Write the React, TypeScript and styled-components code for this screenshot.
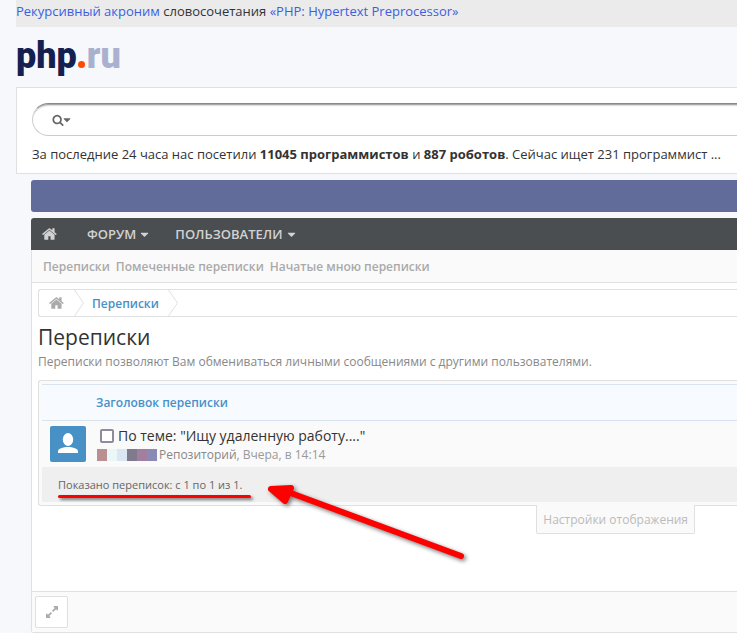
import React from "react";
import styled, { createGlobalStyle } from "styled-components";

const line = "#e0e0e0";
const blue = "#4891c6";

const GlobalStyle = createGlobalStyle`
  * { box-sizing: border-box; }
  body {
    margin: 0;
    background: #f7f8fb;
    color: #333;
    font: 13px/20px "Open Sans", sans-serif;
    overflow-x: hidden;
  }
  a { color: inherit; text-decoration: none; }
  button, input { font: inherit; }
`;

const Page = styled.div`
  padding-left: 16px;
`;

const Slogan = styled.p`
  margin: 0;
  height: 27px;
  padding-top: 1px;
  background: #ebebeb;
  a { color: #3c5fe0; }
`;

const Logo = styled.a`
  display: flex;
  align-items: baseline;
  width: fit-content;
  height: 60px;
  padding-top: 9px;
  font: 900 36px/40px Roboto, sans-serif;
  color: #14204f;
`;

const LogoDot = styled.span`
  width: 7px;
  height: 7px;
  margin: 0 2px 0 1px;
  border-radius: 50%;
  background: #ff4a00;
`;

const LogoZone = styled.span`
  color: #aab1cf;
`;

const SearchPanel = styled.section`
  height: 87px;
  padding: 15px 0 0 15px;
  background: #fff;
  border: 1px solid ${line};
  border-right: 0;
`;

const SearchForm = styled.form`
  display: flex;
  align-items: center;
  height: 33px;
  border: 1px solid #ccc;
  border-top-color: #888;
  border-right: 0;
  border-radius: 17px 0 0 17px;
  box-shadow: inset 0 3px 2px -2px #888;
`;

const SearchMode = styled.button`
  display: flex;
  align-items: center;
  margin-left: 19px;
  padding: 0;
  border: 0;
  background: none;
  color: #666;
  svg + svg { margin-left: -3px; }
`;

const SearchInput = styled.input`
  flex: 1;
  min-width: 0;
  margin-left: 4px;
  border: 0;
  outline: 0;
  background: none;
`;

const Stats = styled.p`
  margin: 8px 0 0;
  white-space: nowrap;
`;

const Main = styled.main`
  margin: 6px 0 0 15px;
`;

const Banner = styled.div`
  height: 32px;
  border-radius: 3px 0 0 3px;
  background: #626c9a;
`;

const NavBar = styled.nav`
  display: flex;
  align-items: center;
  height: 32px;
  margin-top: 6px;
  padding-left: 11px;
  border-radius: 3px 0 0 0;
  background: #4a4e50;
  color: #d2d2d2;
`;

const NavHome = styled.a`
  display: flex;
  margin-right: 29px;
`;

const NavMenu = styled.button`
  display: flex;
  align-items: center;
  gap: 2px;
  margin-right: 24px;
  padding: 0;
  border: 0;
  background: none;
  color: inherit;
  font-weight: 600;
`;

const Content = styled.div`
  border: 1px solid ${line};
  border-width: 0 0 1px 1px;
  border-radius: 0 0 0 3px;
  background: #fff;
`;

const SubNav = styled.nav`
  display: flex;
  align-items: center;
  gap: 6px;
  height: 33px;
  padding: 2px 0 0 11px;
  border-bottom: 1px solid ${line};
  background: #fafafa;
  color: #aaa;
  font-size: 12px;
  font-weight: 600;
`;

const Body = styled.div`
  padding: 6px 0 0 6px;
`;

const Crumbs = styled.nav`
  display: flex;
  align-items: center;
  height: 28px;
  padding-left: 10px;
  border: 1px solid ${line};
  border-right: 0;
  border-radius: 3px 0 0 3px;
  color: ${blue};
  font-size: 12px;
  line-height: 22px;
  font-weight: 600;
`;

const CrumbHome = styled.a`
  display: flex;
  color: #aaa;
`;

const CrumbLink = styled.a`
  padding-top: 2px;
`;

const CrumbArrow = styled.svg`
  margin: 0 8px 0 9px;
  fill: none;
  stroke: ${line};
`;

const Title = styled.h1`
  margin: 4px 0 0;
  font-size: 21px;
  line-height: 32px;
  font-weight: 400;
`;

const Description = styled.p`
  margin: 0;
  color: #888;
  font-size: 12px;
  line-height: 18px;
`;

const Discussions = styled.section`
  margin-top: 9px;
  padding: 3px 0 3px 3px;
  border: 1px solid ${line};
  border-right: 0;
  border-radius: 3px 0 0 3px;
  background: #fafafa;
`;

const ListHeader = styled.header`
  height: 37px;
  padding: 8px 0 0 54px;
  border: 1px solid #d9e4ee;
  border-width: 1px 0;
  background: #f7fbff;
  color: ${blue};
  font-size: 12px;
  font-weight: 600;
`;

const Row = styled.article`
  display: flex;
  gap: 11px;
  height: 46px;
  padding: 5px 0 0 8px;
`;

const Avatar = styled.a`
  width: 36px;
  height: 36px;
  border-radius: 2px;
  overflow: hidden;
  background: ${blue};
`;

const Subject = styled.div`
  display: flex;
  align-items: center;
  gap: 4px;
  padding-left: 3px;
  font-size: 14px;
`;

const CheckBox = styled.input`
  appearance: none;
  width: 14px;
  height: 14px;
  margin: 0;
  border: 2px solid #8f8b9d;
  border-radius: 2px;
  background: #fff;
`;

const Meta = styled.div`
  display: flex;
  align-items: center;
  color: #999;
  font-size: 12px;
  line-height: 18px;
`;

const HiddenName = styled.span`
  display: flex;
  margin-right: 2px;
`;

const Block = styled.span<{ $color: string }>`
  width: 10px;
  height: 12px;
  background: ${(p) => p.$color};
`;

const Author = styled.a`
  color: #888;
`;

const ListFooter = styled.footer`
  height: 35px;
  padding: 8px 0 0 16px;
  background: #efefef;
  color: #666;
  font-size: 11px;
`;

const Marked = styled.span`
  position: relative;
  display: inline-block;
`;

const Underline = styled.span`
  position: absolute;
  left: 0;
  right: -9px;
  top: 20px;
  height: 3px;
  border-radius: 2px;
  background: #f00;
  box-shadow: 2px 2px 3px #777;
`;

const Arrow = styled.svg`
  position: absolute;
  left: 204px;
  top: 4px;
  overflow: visible;
  filter: drop-shadow(2px 2px 2px #777);
`;

const Options = styled.div`
  display: flex;
  justify-content: flex-end;
  height: 86px;
  margin-top: -1px;
  padding-right: 42px;
`;

const OptionsButton = styled.button`
  height: 29px;
  padding: 2px 6px 0;
  border: 1px solid ${line};
  border-top: 0;
  border-radius: 0 0 2px 2px;
  background: #fafafa;
  color: #bbb;
  font-size: 12px;
`;

const BottomBar = styled.div`
  height: 41px;
  padding: 4px 0 0 3px;
  border-top: 1px solid ${line};
  background: #fafafa;
`;

const ExpandButton = styled.button`
  display: flex;
  align-items: center;
  justify-content: center;
  width: 33px;
  height: 32px;
  padding: 0;
  border: 1px solid ${line};
  border-radius: 2px;
  background: #fff;
  color: #aaa;
`;

const nameBlocks = ["#b98f8f", "#e9f7f9", "#dce5f2", "#807a8d", "#a37f9f", "#898bb5"];

const iconPaths = {
  home: "M1408 992v480q0 26-19 45t-45 19h-384v-384h-256v384h-384q-26 0-45-19t-19-45v-480q0-1 .5-3t.5-3l575-474 575 474q1 2 1 6zm223-69l-62 74q-8 9-21 11h-3q-13 0-21-7l-692-577-692 577q-12 8-24 7-13-2-21-11l-62-74q-8-10-7-23.5t11-21.5l719-599q32-26 76-26t76 26l244 204v-195q0-14 9-23t23-9h192q14 0 23 9t9 23v408l219 182q10 8 11 21.5t-7 23.5z",
  caret: "M1408 704q0 26-19 45l-448 448q-19 19-45 19t-45-19l-448-448q-19-19-19-45t19-45 45-19h896q26 0 45 19t19 45z",
  search: "M1216 832q0-185-131.5-316.5t-316.5-131.5-316.5 131.5-131.5 316.5 131.5 316.5 316.5 131.5 316.5-131.5 131.5-316.5zm512 832q0 52-38 90t-90 38q-54 0-90-38l-343-342q-179 124-399 124-143 0-273.5-55.5t-225-150-150-225-55.5-273.5 55.5-273.5 150-225 225-150 273.5-55.5 273.5 55.5 225 150 150 225 55.5 273.5q0 220-124 399l343 343q37 37 37 90z",
  expand: "M883 1056q0 13-10 23l-332 332 144 144q19 19 19 45t-19 45-45 19h-448q-26 0-45-19t-19-45v-448q0-26 19-45t45-19 45 19l144 144 332-332q10-10 23-10t23 10l114 114q10 10 10 23zm781-864v448q0 26-19 45t-45 19-45-19l-144-144-332 332q-10 10-23 10t-23-10l-114-114q-10-10-10-23t10-23l332-332-144-144q-19-19-19-45t19-45 45-19h448q26 0 45 19t19 45z",
};

function Icon({ name, size }: { name: keyof typeof iconPaths; size: number }) {
  return (
    <svg width={size} height={size} viewBox="0 0 1792 1792" fill="currentColor" aria-hidden="true">
      <path d={iconPaths[name]} />
    </svg>
  );
}

function Chevron() {
  return (
    <CrumbArrow width="10" height="26" viewBox="0 0 10 26" aria-hidden="true">
      <path d="M0.5 0 L9.5 13 L0.5 26" />
    </CrumbArrow>
  );
}

export default function App() {
  return (
    <>
      <GlobalStyle />
      <Page>
        <Slogan>
          <a href="#acronym">Рекурсивный акроним</a> словосочетания{" "}
          <a href="#php">«PHP: Hypertext Preprocessor»</a>
        </Slogan>
        <Logo href="#home" aria-label="php.ru">
          php
          <LogoDot />
          <LogoZone>ru</LogoZone>
        </Logo>
        <SearchPanel>
          <SearchForm>
            <SearchMode type="button" aria-label="Область поиска">
              <Icon name="search" size={12} />
              <svg width="12" height="12" viewBox="0 0 1792 1792" fill="currentColor" aria-hidden="true">
                <path d={iconPaths.caret} />
              </svg>
            </SearchMode>
            <SearchInput type="search" aria-label="Поиск" />
          </SearchForm>
          <Stats>
            За последние 24 часа нас посетили <b>11045 программистов</b> и <b>887 роботов</b>.
            Сейчас ищет 231 программист ...
          </Stats>
        </SearchPanel>
        <Main>
          <Banner />
          <NavBar>
            <NavHome href="#home" aria-label="Главная"><Icon name="home" size={16} /></NavHome>
            <NavMenu type="button">ФОРУМ <Icon name="caret" size={13} /></NavMenu>
            <NavMenu type="button">ПОЛЬЗОВАТЕЛИ <Icon name="caret" size={13} /></NavMenu>
          </NavBar>
          <Content>
            <SubNav>
              <a href="#conversations">Переписки</a>
              <a href="#starred">Помеченные переписки</a>
              <a href="#mine">Начатые мною переписки</a>
            </SubNav>
            <Body>
              <Crumbs>
                <CrumbHome href="#home" aria-label="Главная"><Icon name="home" size={16} /></CrumbHome>
                <Chevron />
                <CrumbLink href="#conversations">Переписки</CrumbLink>
                <Chevron />
              </Crumbs>
              <Title>Переписки</Title>
              <Description>
                Переписки позволяют Вам обмениваться личными сообщениями с другими пользователями.
              </Description>
              <Discussions>
                <ListHeader>Заголовок переписки</ListHeader>
                <Row>
                  <Avatar href="#author" aria-label="Автор">
                    <svg width="36" height="36" viewBox="0 0 36 36" fill="#fff">
                      <ellipse cx="18" cy="13.5" rx="5.2" ry="6.5" />
                      <path d="M8 27v-2c0-2 5-4 10-4s10 2 10 4v2z" />
                    </svg>
                  </Avatar>
                  <div>
                    <Subject>
                      <CheckBox type="checkbox" id="conversation" />
                      <label htmlFor="conversation">По теме: "Ищу удаленную работу...."</label>
                    </Subject>
                    <Meta>
                      <HiddenName>
                        {nameBlocks.map((color) => <Block key={color} $color={color} />)}
                      </HiddenName>
                      <Author href="#author">Репозиторий</Author>, Вчера, в 14:14
                    </Meta>
                  </div>
                </Row>
                <ListFooter>
                  <Marked>
                    Показано переписок: с 1 по 1 из 1.
                    <Underline />
                    <Arrow width="208" height="86" viewBox="0 0 208 86" aria-hidden="true">
                      <path d="M26 13 L199 77" stroke="#f00" strokeWidth="6" strokeLinecap="round" />
                      <path
                        d="M9 10 L29 9 L23 22 Z"
                        fill="#f00"
                        stroke="#f00"
                        strokeWidth="6"
                        strokeLinejoin="round"
                      />
                    </Arrow>
                  </Marked>
                </ListFooter>
              </Discussions>
              <Options>
                <OptionsButton type="button">Настройки отображения</OptionsButton>
              </Options>
            </Body>
            <BottomBar>
              <ExpandButton type="button" aria-label="Развернуть"><Icon name="expand" size={14} /></ExpandButton>
            </BottomBar>
          </Content>
        </Main>
      </Page>
    </>
  );
}
